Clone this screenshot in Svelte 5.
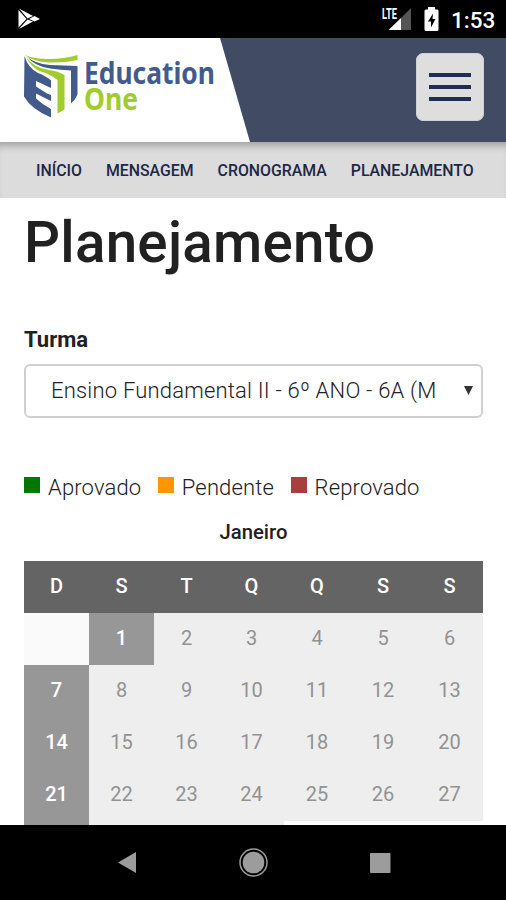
<script>
	const links = ['Início', 'Mensagem', 'Cronograma', 'Planejamento'];

	const legend = [
		{ label: 'Aprovado', status: 'approved' },
		{ label: 'Pendente', status: 'pending' },
		{ label: 'Reprovado', status: 'rejected' }
	];

	const weekdays = ['D', 'S', 'T', 'Q', 'Q', 'S', 'S'];
	const holidays = [1];

	// January starts on a Monday; the last visible week stays blank under the fold
	const days = [null, ...Array.from({ length: 27 }, (_, i) => i + 1)];
	const lastWeek = 4;

	function isOff(day, index) {
		return day !== null && (index % 7 === 0 || holidays.includes(day));
	}
</script>

<div class="screen">
	<div class="status">
		<svg class="play" viewBox="0 0 24 24" width="24" height="24">
			<path d="M1 1.5 L15 9 L9.5 11.5 Z M1 22 L15 14.500 L9.500 12.500 Z" fill="#fff" />
			<path d="M.5 3 L8.500 12 L.5 20.500 Z M11 12 L16.500 9 L22 12 L16.500 14.500 Z" fill="#fff" />
		</svg>
		<div class="status-icons">
			<svg viewBox="0 0 30 26" width="30" height="26">
				<path d="M29 2 V24 H19 V12 Z" fill="#555" />
				<path d="M6.500 24 L19 12 V24 Z" fill="#fff" />
				<text x="0" y="12.500" font-size="14" font-weight="700" fill="#fff" textLength="15" lengthAdjust="spacingAndGlyphs">LTE</text>
			</svg>
			<svg class="battery" viewBox="0 0 15 24" width="15" height="24">
				<path d="M4 0 H11 V2.500 H13.500 Q14.500 2.500 14.500 4 V22.500 Q14.500 24 13 24 H2 Q.5 24 .5 22.500 V4 Q.5 2.500 2 2.500 H4 Z" fill="#fff" />
				<path d="M9 6.500 L4 14.500 H7 V20.500 L11.500 12 H8.500 Z" fill="#000" />
			</svg>
			<span class="clock">1:53</span>
		</div>
	</div>

	<header>
		<svg class="brand" viewBox="0 38 252 104" width="252" height="104">
			<path d="M0 38 H220 L250 142 H0 Z" fill="#fff" />
			<path d="M24.500 56 Q28 68 38 73 Q46 76 51 80.500 V88 L36 81 V86.500 L47 93.500 L51 95 V101 L36 93.500 V98.500 Q43 105 51 109 V117.500 Q31 109 24 96.500 Z" fill="#435a8c" />
			<path d="M26 57 Q34 68 49 70 Q58 71 64.500 75 V109.500 L57.500 113.500 V80 Q50 74 42 72 Q31 68 26 57 Z" fill="#a0cd2c" />
			<path d="M27 56.500 Q34 63.500 50 65 L77.500 66 V94 Q76 99 71 103.500 V70.500 Q61 70 50 68.500 Q34 66 27 56.500 Z" fill="#435a8c" />
			<path d="M24.500 55 Q34 59 49 59 Q64 59 77.500 55 V60 Q64 63 49 62.500 Q33 61.500 24.500 55 Z" fill="#a0cd2c" />
			<text x="84" y="84" font-size="30" font-weight="700" fill="#435a8c" textLength="131" lengthAdjust="spacingAndGlyphs">Education</text>
			<text x="84" y="109.500" font-size="30" font-weight="700" fill="#a0cd2c" textLength="54" lengthAdjust="spacingAndGlyphs">One</text>
		</svg>
		<button class="menu" aria-label="Menu">
			<span></span>
			<span></span>
			<span></span>
		</button>
	</header>

	<nav>
		{#each links as link}
			<a href="#{link}">{link}</a>
		{/each}
	</nav>

	<main>
		<h1>Planejamento</h1>

		<div class="label">Turma</div>
		<div class="select">
			<span>Ensino Fundamental II - 6º ANO - 6A (M</span>
			<svg viewBox="0 0 9 9" width="9" height="9"><path d="M0 0 H9 L4.500 9 Z" fill="#333" /></svg>
		</div>

		<div class="legend">
			{#each legend as item}
				<div class="item">
					<i class={item.status}></i>
					<span>{item.label}</span>
				</div>
			{/each}
		</div>

		<h2>Janeiro</h2>
		<div class="calendar">
			{#each weekdays as name}
				<div class="weekday">{name}</div>
			{/each}
			{#each days as day, i}
				<div class="day" class:empty={day === null} class:off={isOff(day, i)}>{day ?? ''}</div>
			{/each}
			{#each { length: lastWeek } as _, i}
				<div class="day" class:off={i === 0}></div>
			{/each}
		</div>
	</main>

	<div class="softkeys">
		<svg viewBox="0 0 506 75" width="506" height="75">
			<path d="M118 37.500 L136 27 V48 Z" fill="#9c9c9c" />
			<circle cx="253.500" cy="37.500" r="13.500" fill="none" stroke="#9c9c9c" stroke-width="1.500" />
			<circle cx="253.500" cy="37.500" r="10.800" fill="#9c9c9c" />
			<rect x="370" y="28" width="20.500" height="20" rx="1" fill="#9c9c9c" />
		</svg>
	</div>
</div>

<style>
	:global(body) {
		margin: 0;
	}
	.screen {
		width: 506px;
		height: 900px;
		display: flex;
		flex-direction: column;
		overflow: hidden;
		background: #fff;
		font-family: Roboto, sans-serif;
		color: #212121;
	}
	svg {
		display: block;
		flex: none;
	}
	.status {
		flex: none;
		height: 38px;
		box-sizing: border-box;
		padding: 0 12px 0 18px;
		display: flex;
		align-items: center;
		justify-content: space-between;
		background: #000;
	}
	.status-icons {
		display: flex;
		align-items: center;
	}
	.battery {
		margin-left: 12px;
	}
	.clock {
		width: 43px;
		margin-left: 12px;
		font-size: 22.5px;
		font-weight: 500;
		line-height: 38px;
		padding-top: 2px;
		color: #fff;
		white-space: nowrap;
	}
	header {
		flex: none;
		height: 104px;
		box-sizing: border-box;
		display: flex;
		justify-content: space-between;
		align-items: flex-start;
		padding-right: 22px;
		background: #414c64;
	}
	.brand text {
		font-family: 'Noto Sans', sans-serif;
	}
	.menu {
		width: 68px;
		height: 68px;
		margin-top: 15px;
		padding: 0 12px;
		display: flex;
		flex-direction: column;
		justify-content: center;
		gap: 8px;
		border: 1px solid #cfd2d6;
		border-radius: 7px;
		background: #dedede;
	}
	.menu span {
		height: 4px;
		background: #1f2d52;
	}
	nav {
		flex: none;
		height: 56px;
		display: flex;
		align-items: center;
		gap: 24px;
		padding-left: 36px;
		background: #dcdcdc;
		box-shadow: inset 0 9px 8px -6px rgba(0, 0, 0, 0.3);
	}
	nav a {
		font-size: 15.85px;
		font-weight: 500;
		text-transform: uppercase;
		text-decoration: none;
		color: #1d2747;
	}
	main {
		flex: 1;
		min-height: 0;
		overflow: hidden;
		padding: 0 23px 0 24px;
	}
	h1 {
		margin: 13px 0 0;
		font-size: 56.5px;
		font-weight: 500;
		line-height: 64px;
		letter-spacing: 0.25px;
	}
	.label {
		margin-top: 52px;
		font-size: 22px;
		font-weight: 700;
		line-height: 26px;
	}
	.select {
		height: 54px;
		box-sizing: border-box;
		margin-top: 11px;
		padding: 0 8px 2px 25px;
		display: flex;
		align-items: center;
		justify-content: space-between;
		border: 2px solid #d0d0d0;
		border-radius: 6px;
		font-size: 22px;
		font-weight: 300;
		letter-spacing: 0.2px;
		white-space: nowrap;
		color: #222;
	}
	.legend {
		display: flex;
		gap: 16.5px;
		margin-top: 57px;
		height: 26px;
		font-size: 22px;
		font-weight: 300;
		line-height: 26px;
		letter-spacing: 0.15px;
	}
	.item {
		display: flex;
		gap: 8px;
	}
	.item i {
		width: 16px;
		height: 16px;
		margin-top: 2px;
	}
	.approved {
		background: #007800;
	}
	.pending {
		background: #ff9600;
	}
	.rejected {
		background: #a93e3e;
	}
	h2 {
		margin: 18px 0 0;
		font-size: 20.3px;
		font-weight: 500;
		line-height: 26px;
		text-align: center;
	}
	.calendar {
		display: grid;
		grid-template-columns: 65px 65px 65px 65px 66px 66px 67px;
		grid-template-rows: 52px 52px;
		grid-auto-rows: 52.3px;
		margin-top: 15.500px;
		font-size: 20px;
		text-align: center;
		line-height: 50px;
	}
	.weekday {
		background: #646464;
		color: #fff;
		font-weight: 500;
	}
	.day {
		background: #eee;
		color: #929292;
	}
	.day.off {
		background: #979797;
		color: #fff;
		font-weight: 500;
	}
	.day.empty {
		background: #fafafa;
	}
	.softkeys {
		flex: none;
		height: 75px;
		background: #000;
	}
</style>
